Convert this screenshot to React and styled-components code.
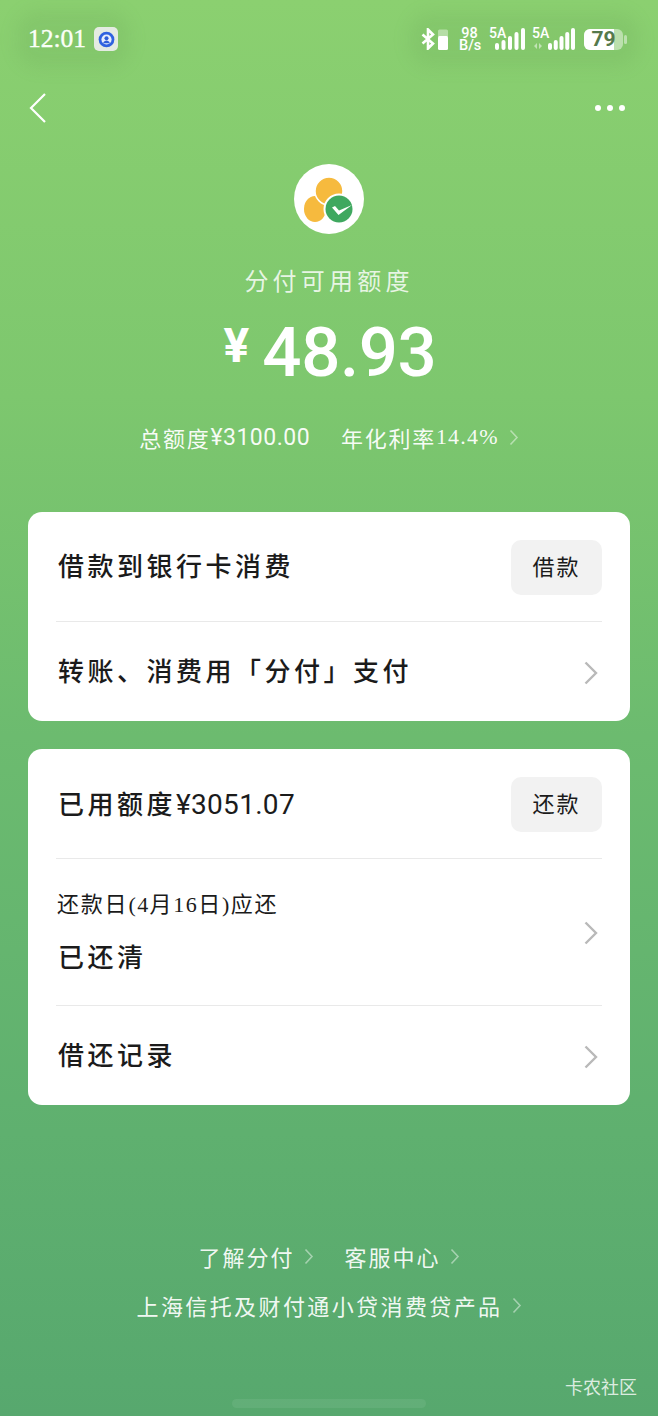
import React from 'react'
import styled, { createGlobalStyle } from 'styled-components'

const Global = createGlobalStyle`
  html, body { margin: 0; padding: 0; }
  body { font-family: "Noto Sans CJK SC", "Noto Sans", sans-serif; }
`

const Page = styled.div`
  position: relative;
  width: 658px;
  height: 1416px;
  overflow: hidden;
  background: linear-gradient(180deg, #8bd070 0%, #7dc76e 28%, #6cbb6f 52%, #5fb06f 80%, #57a86e 100%);
`

const StatusBar = styled.div`
  height: 78px;
  padding: 0 31px 0 28px;
  box-sizing: border-box;
  display: flex;
  align-items: center;
  justify-content: space-between;
`
const StatusGroup = styled.div`
  position: relative;
  display: flex;
  align-items: center;
  gap: ${p => p.$gap || 0}px;
  &::before {
    content: '';
    position: absolute;
    inset: -14px -12px;
    border-radius: 24px;
    background: rgba(90, 150, 80, 0.13);
    filter: blur(8px);
  }
  & > * { position: relative; }
`
const Time = styled.span`
  font-family: "Liberation Serif", serif;
  font-size: 25.5px;
  letter-spacing: 0;
  -webkit-text-stroke: 0.4px #fbfff8;
  color: #fbfff8;
`
const AppBadge = styled.div`
  width: 24px;
  height: 24px;
  border-radius: 5px;
  background: #e4ebe2;
  display: flex;
  align-items: center;
  justify-content: center;
`
const Speed = styled.div`
  margin: 2px 0 0 11px;
  width: 21px;
  font-family: Roboto, sans-serif;
  font-size: 14.5px;
  line-height: 12.5px;
  font-weight: 500;
  text-align: center;
  color: #fff;
`
const Signal = styled.div`
  position: relative;
  margin-left: ${p => p.$ml}px;
  width: ${p => p.$w}px;
  height: 22px;
  display: flex;
  align-items: flex-end;
  justify-content: flex-end;
`
const SignalLabel = styled.span`
  position: absolute;
  left: 0;
  top: -2px;
  font-family: Roboto, sans-serif;
  font-size: 14px;
  line-height: 14px;
  font-weight: 500;
  color: #fff;
`
const DataArrows = styled.svg`
  position: absolute;
  left: 2px;
  bottom: 1px;
  opacity: 0.5;
`
const Battery = styled.div`
  position: relative;
  margin-left: 9px;
  width: 39px;
  height: 21px;
  border-radius: 6px;
  overflow: hidden;
  background: rgba(255, 255, 255, 0.45);
  display: flex;
  align-items: center;
  justify-content: center;
  font-family: Roboto, sans-serif;
  font-size: 21px;
  font-weight: 700;
  color: #55794c;
  & > i {
    position: absolute;
    left: 0;
    top: 0;
    bottom: 0;
    width: 30px;
    background: #fff;
  }
  & > span { position: relative; }
`
const BatteryCap = styled.div`
  width: 3px;
  height: 9px;
  margin-left: 1px;
  border-radius: 2px;
  background: rgba(255, 255, 255, 0.45);
`

const NavBar = styled.div`
  height: 60px;
  padding: 0 33px 0 28px;
  display: flex;
  align-items: center;
  justify-content: space-between;
`
const Dots = styled.div`
  display: flex;
  gap: 6px;
  & > i {
    width: 6px;
    height: 6px;
    border-radius: 50%;
    background: #fff;
  }
`

const Hero = styled.div`
  padding-top: 26px;
  display: flex;
  flex-direction: column;
  align-items: center;
  color: #fff;
`
const Logo = styled.div`
  width: 70px;
  height: 70px;
  border-radius: 50%;
  background: #fff;
`
const HeroTitle = styled.div`
  margin-top: 28px;
  font-size: 24px;
  line-height: 36px;
  letter-spacing: 4.2px;
  color: rgba(255, 255, 255, 0.82);
`
const Amount = styled.div`
  margin-top: 19px;
  height: 72px;
  display: flex;
  align-items: center;
  gap: 13px;
  font-family: Roboto, sans-serif;
`
const Yen = styled.span`
  margin: -15px 0 0 2px;
  font-size: 48px;
  font-weight: 700;
  line-height: 1;
`
const Value = styled.span`
  font-size: 69px;
  font-weight: 500;
  line-height: 72px;
  letter-spacing: -0.4px;
`
const Rate = styled.div`
  margin-top: 32px;
  height: 32px;
  display: flex;
  align-items: center;
  font-size: 22px;
  letter-spacing: 1.7px;
  color: rgba(255, 255, 255, 0.95);
`
const RateNum = styled.span`
  font-family: Roboto, sans-serif;
  font-size: 23px;
  letter-spacing: 0.5px;
  margin-right: 31px;
`
const RateSerif = styled.span`
  font-family: "Liberation Serif", serif;
  font-size: 22px;
  letter-spacing: 1.2px;
  margin-right: 10px;
`

const Cards = styled.div`
  margin-top: 59px;
  padding: 0 28px;
  display: flex;
  flex-direction: column;
  gap: 28px;
`
const Card = styled.div`
  background: #fff;
  border-radius: 14px;
  padding: 0 28px;
`
const Row = styled.div`
  height: ${p => p.$h}px;
  display: flex;
  align-items: center;
  justify-content: space-between;
  border-bottom: ${p => (p.$last ? 'none' : '1px solid #e9e9e9')};
  box-sizing: border-box;
`
const RowText = styled.div`
  padding-left: 2px;
  margin-bottom: ${p => (p.$flat ? 0 : 3)}px;
  font-size: 26px;
  font-weight: 500;
  line-height: 36px;
  letter-spacing: 3.5px;
  color: #1b1b1b;
`
const RowNum = styled.span`
  font-family: Roboto, sans-serif;
  font-size: 28px;
  font-weight: 400;
  letter-spacing: 0.3px;
`
const SubText = styled.div`
  padding-left: 1px;
  font-size: 22px;
  line-height: 30px;
  letter-spacing: 1.8px;
  color: #1b1b1b;
  margin-bottom: 18px;
  & > span {
    font-family: "Liberation Serif", serif;
    letter-spacing: 1.4px;
  }
`
const ActionButton = styled.button`
  width: 91px;
  height: 55px;
  margin-top: 2px;
  padding: 0 0 5px;
  border: 0;
  border-radius: 10px;
  background: #f2f2f2;
  font-family: inherit;
  font-size: 22px;
  letter-spacing: 2px;
  color: #1b1b1b;
`
const RowChevron = styled.div`
  display: flex;
  margin: 2px 4px 0 0;
`

const Footer = styled.div`
  margin-top: 136px;
  display: flex;
  flex-direction: column;
  align-items: center;
  gap: 19px;
`
const FooterLine = styled.div`
  height: 30px;
  display: flex;
  align-items: center;
  gap: ${p => p.$gap || 0}px;
`
const FooterLink = styled.div`
  display: flex;
  align-items: center;
  gap: 9px;
  font-size: 22px;
  line-height: 30px;
  letter-spacing: ${p => p.$ls || 2}px;
  color: rgba(255, 255, 255, 0.93);
`
const Watermark = styled.div`
  position: absolute;
  right: 21px;
  bottom: 18px;
  font-size: 18px;
  line-height: 24px;
  color: rgba(255, 255, 255, 0.8);
`
const HomeBar = styled.div`
  position: absolute;
  left: 232px;
  bottom: 8px;
  width: 194px;
  height: 9px;
  border-radius: 5px;
  background: rgba(255, 255, 255, 0.07);
`

const Chevron = ({ w = 14, h = 24, color = '#b9b9b9', sw = 2.4 }) => (
  <svg width={w} height={h} viewBox={`0 0 ${w} ${h}`} fill="none">
    <path d={`M1.5 1.5 L${w - 2} ${h / 2} L1.5 ${h - 1.5}`} stroke={color} strokeWidth={sw} />
  </svg>
)

const SmallChevron = () => <Chevron w={10} h={17} color="rgba(255,255,255,.45)" sw={1.6} />

const Bars = ({ width = 30 }) => {
  const pitch = (width - 4) / 4
  return (
    <svg width={width} height="22" viewBox={`0 0 ${width} 22`} fill="#fff">
      {[7, 10, 14, 18, 22].map((h, i) => (
        <rect key={i} x={i * pitch} y={22 - h} width="4" height={h} rx="2" />
      ))}
    </svg>
  )
}

export default function App() {
  return (
    <Page>
      <Global />
      <StatusBar>
        <StatusGroup $gap={8}>
          <Time>12:01</Time>
          <AppBadge>
            <svg width="17" height="17" viewBox="0 0 16 16">
              <circle cx="8" cy="8" r="7.4" fill="#2f62e0" />
              <circle cx="8" cy="8" r="4.8" fill="#e8eefc" />
              <circle cx="8" cy="6.8" r="1.9" fill="#2f5fd8" />
              <path d="M4.8 11.5c.6-1.8 1.8-2.6 3.2-2.6s2.6.8 3.2 2.6z" fill="#2f5fd8" />
            </svg>
          </AppBadge>
        </StatusGroup>
        <StatusGroup>
          <svg width="27" height="22" viewBox="0 0 27 22" fill="none">
            <path d="M1.5 6.5 L12 15.5 L7 20.5 V1.5 L12 6.5 L1.5 15.5" stroke="#fff" strokeWidth="2.6" />
            <rect x="17" y="8" width="10" height="14" rx="1.5" fill="#fff" />
            <path d="M18.5 1.5h7a1.5 1.5 0 0 1 1.5 1.5v6h-10v-6a1.5 1.5 0 0 1 1.5-1.5z" fill="#fff" opacity=".4" />
          </svg>
          <Speed>98<br />B/s</Speed>
          <Signal $w={36} $ml={9}>
            <SignalLabel>5A</SignalLabel>
            <Bars width={30} />
          </Signal>
          <Signal $w={43} $ml={7}>
            <SignalLabel>5A</SignalLabel>
            <DataArrows width="8" height="6" viewBox="0 0 8 6" fill="#fff">
              <path d="M3 0 L0 3 L3 6 Z M5 0 L8 3 L5 6 Z" />
            </DataArrows>
            <Bars width={27} />
          </Signal>
          <Battery>
            <i />
            <span>79</span>
          </Battery>
          <BatteryCap />
        </StatusGroup>
      </StatusBar>

      <NavBar>
        <svg width="20" height="32" viewBox="0 0 20 32" fill="none">
          <path d="M17 2 L3 16 L17 30" stroke="#fff" strokeWidth="2.2" />
        </svg>
        <Dots><i /><i /><i /></Dots>
      </NavBar>

      <Hero>
        <Logo>
          <svg width="70" height="70" viewBox="0 0 70 70">
            <ellipse cx="21" cy="45" rx="11" ry="13" fill="#f6ba3e" />
            <circle cx="35" cy="27" r="14" fill="#f6ba3e" stroke="#fff" strokeWidth="1.5" />
            <circle cx="45" cy="45" r="15.5" fill="#fff" />
            <circle cx="45" cy="45" r="13.5" fill="#3fa85f" />
            <path d="M38 43.5 L44.5 51 L58 41 L45 46.5 L41 42 Z" fill="#fff" />
          </svg>
        </Logo>
        <HeroTitle>分付可用额度</HeroTitle>
        <Amount>
          <Yen>¥</Yen>
          <Value>48.93</Value>
        </Amount>
        <Rate>
          总额度<RateNum>¥3100.00</RateNum>
          年化利率<RateSerif>14.4%</RateSerif>
          <SmallChevron />
        </Rate>
      </Hero>

      <Cards>
        <Card>
          <Row $h={110}>
            <RowText>借款到银行卡消费</RowText>
            <ActionButton>借款</ActionButton>
          </Row>
          <Row $h={99} $last>
            <RowText>转账、消费用「分付」支付</RowText>
            <RowChevron><Chevron /></RowChevron>
          </Row>
        </Card>
        <Card>
          <Row $h={110}>
            <RowText $flat>已用额度<RowNum>¥3051.07</RowNum></RowText>
            <ActionButton>还款</ActionButton>
          </Row>
          <Row $h={147}>
            <div>
              <SubText>还款日<span>(4</span>月<span>16</span>日<span>)</span>应还</SubText>
              <RowText>已还清</RowText>
            </div>
            <RowChevron><Chevron /></RowChevron>
          </Row>
          <Row $h={99} $last>
            <RowText>借还记录</RowText>
            <RowChevron><Chevron /></RowChevron>
          </Row>
        </Card>
      </Cards>

      <Footer>
        <FooterLine $gap={31}>
          <FooterLink>了解分付<SmallChevron /></FooterLink>
          <FooterLink>客服中心<SmallChevron /></FooterLink>
        </FooterLine>
        <FooterLine>
          <FooterLink $ls={2.4}>上海信托及财付通小贷消费贷产品<SmallChevron /></FooterLink>
        </FooterLine>
      </Footer>

      <Watermark>卡农社区</Watermark>
      <HomeBar />
    </Page>
  )
}
